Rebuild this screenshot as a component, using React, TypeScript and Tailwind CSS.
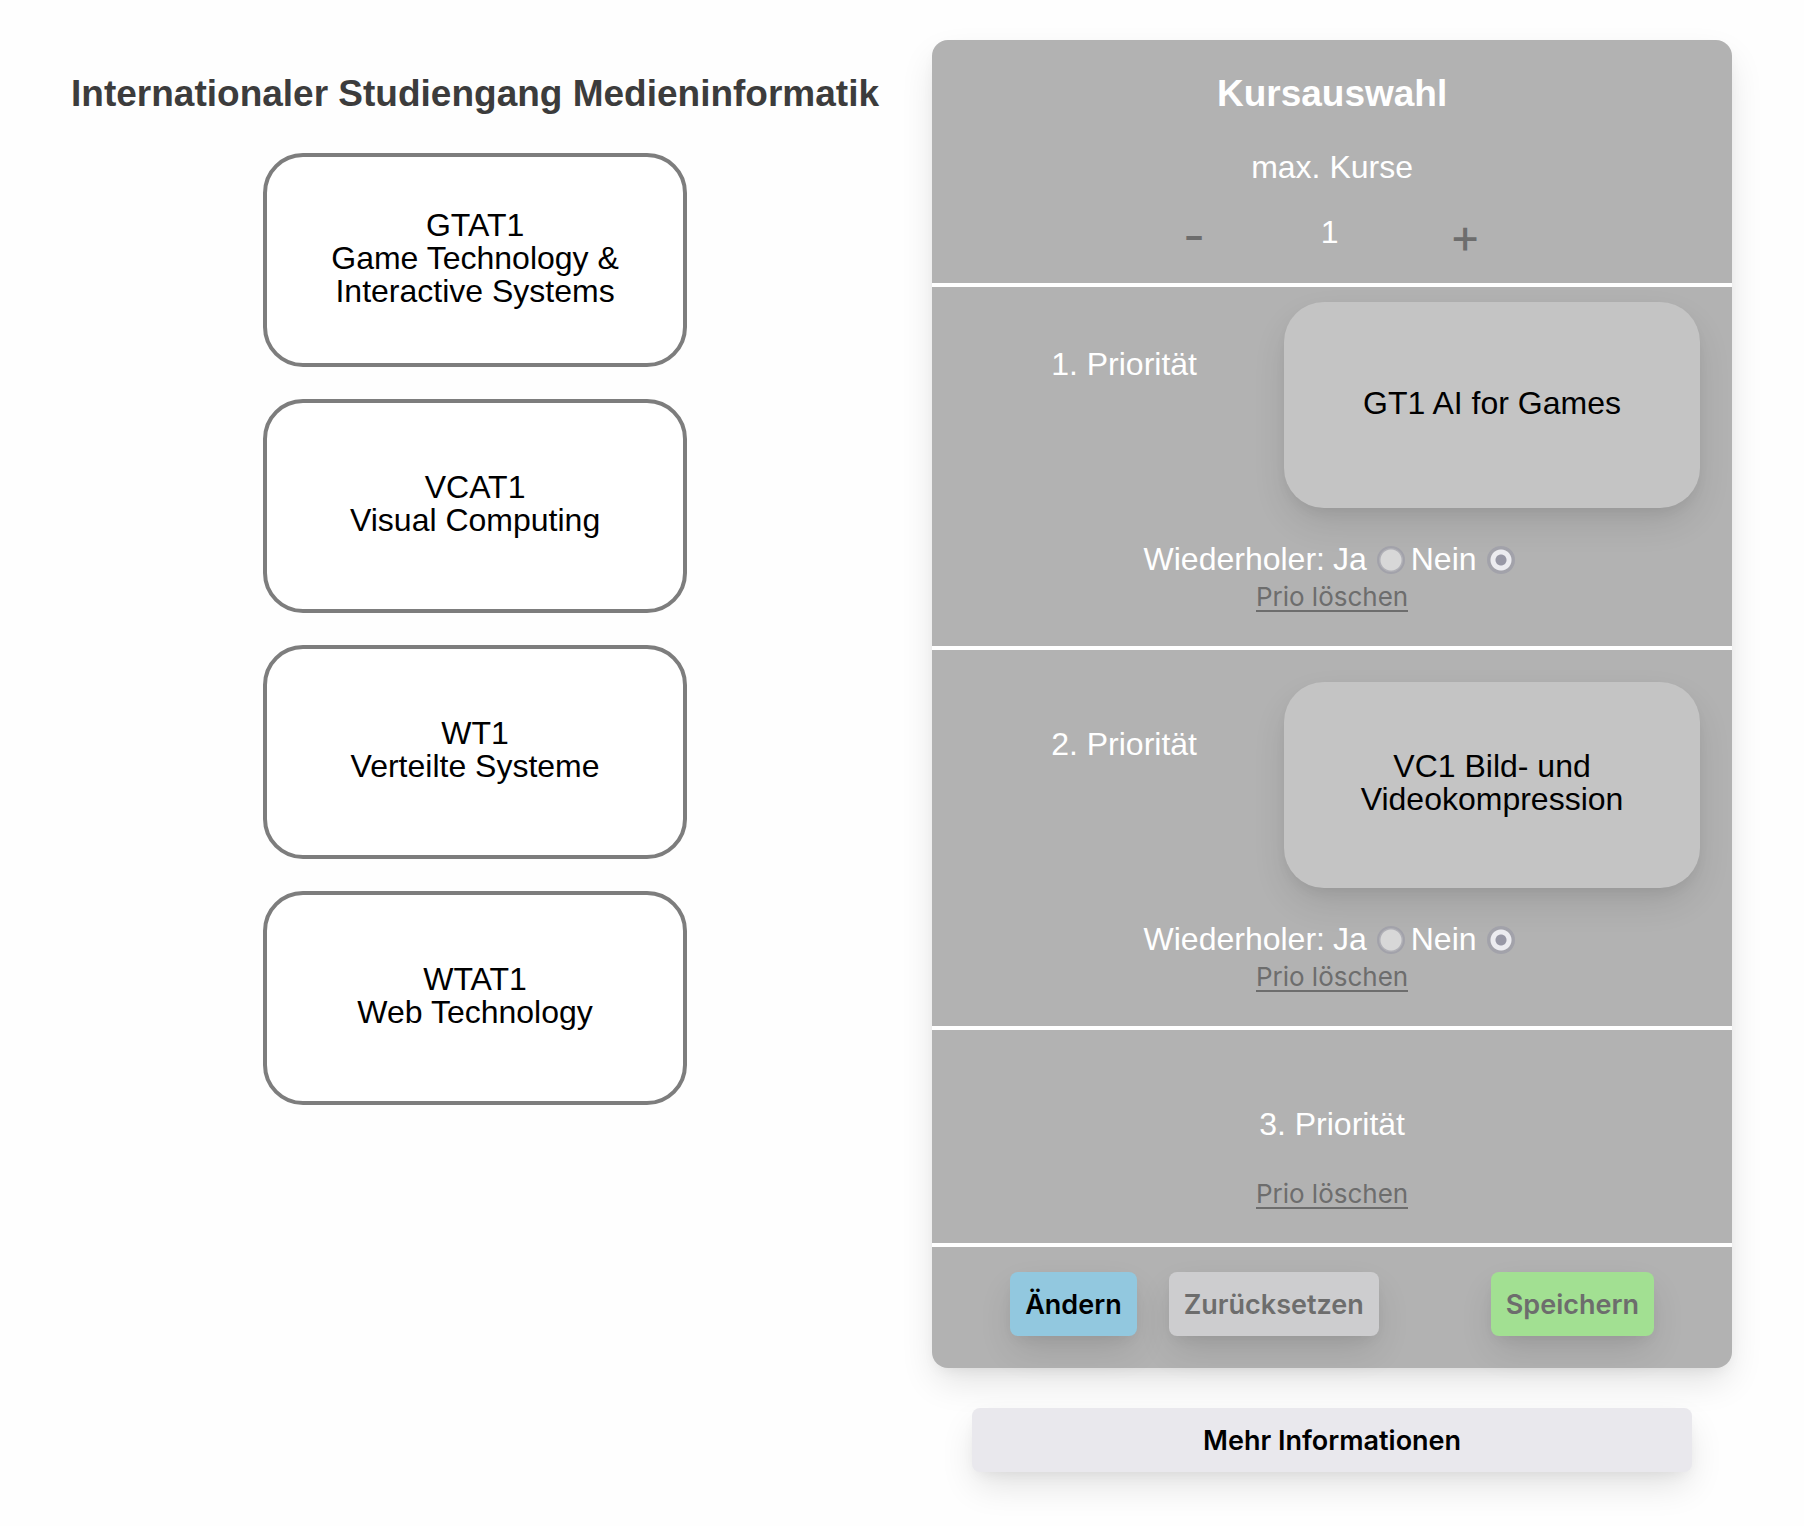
import { useState } from "react";

const courses = [
  { code: "GTAT1", name: "Game Technology & Interactive Systems" },
  { code: "VCAT1", name: "Visual Computing" },
  { code: "WT1", name: "Verteilte Systeme" },
  { code: "WTAT1", name: "Web Technology" },
];

const shadow = "shadow-[0_16px_36px_-4px_rgba(0,0,0,0.12),0_6px_16px_-6px_rgba(0,0,0,0.08)]";

function Radio({ name, label, value, on, set }: { name: string; label: string; value: boolean; on: boolean; set: (v: boolean) => void }) {
  return (
    <label className="flex items-center gap-2">
      {label}
      <input
        type="radio"
        name={name}
        checked={on === value}
        onChange={() => set(value)}
        className="mr-[6px] ml-[2px] size-7 appearance-none rounded-full border-2 border-[#a2a2aa] bg-[radial-gradient(circle,#d8d8d8_10px,#b0b0b6_11px)] checked:bg-[radial-gradient(circle,#9898a6_5px,#ececf0_6px,#ececf0_10px,#a2a2aa_11px)] bg-origin-border"
      />
    </label>
  );
}

function DeletePrio() {
  return (
    <button type="button" className="mx-auto mt-2 block h-7 border-b-2 border-[#6d6d6d] font-[Inter] text-[26px] leading-[26px] text-[#6d6d6d]">
      Prio löschen
    </button>
  );
}

function Priority({ nr, course, first }: { nr: number; course?: string; first?: boolean }) {
  const [repeat, setRepeat] = useState(false);
  return (
    <section className={`border-b-4 border-white px-8 pb-[34px] text-white ${first ? "pt-[15px]" : "pt-8"}`}>
      {course ? (
        <>
          <div className="grid grid-cols-[10fr_13fr]">
            <h2 className="pt-[46px] text-center">{nr}. Priorität</h2>
            <div className={`flex min-h-[206px] items-center justify-center rounded-[40px] bg-[#c4c4c4] px-16 pb-1 text-center text-black ${shadow}`}>
              {course}
            </div>
          </div>
          <div role="radiogroup" aria-label="Wiederholer" className="mt-[35px] flex justify-center">
            <span className="mr-2">Wiederholer:</span>
            <Radio name={`repeat-${nr}`} label="Ja" value={true} on={repeat} set={setRepeat} />
            <Radio name={`repeat-${nr}`} label="Nein" value={false} on={repeat} set={setRepeat} />
          </div>
        </>
      ) : (
        <h2 className="mb-10 pt-[46px] text-center">{nr}. Priorität</h2>
      )}
      <DeletePrio />
    </section>
  );
}

export default function App() {
  const [max, setMax] = useState(1);
  return (
    <main className="grid min-h-screen grid-cols-[8fr_7fr] items-start bg-[#fefefe] pt-10 pr-[72px] pb-10 pl-[18px] font-['Liberation_Sans',Arial,sans-serif] text-[32px] leading-[33px]">
      <div className="flex flex-col items-center gap-8 pt-8">
        <h1 className="mb-[5px] text-[37px] leading-[44px] font-bold whitespace-nowrap text-[#3c3c3c]">Internationaler Studiengang Medieninformatik</h1>
        {courses.map((c) => (
          <article key={c.code} className="flex min-h-[214px] w-[424px] flex-col items-center justify-center rounded-[40px] border-4 border-[#7d7d7d] bg-white px-14 pb-1 text-center text-black">
            <span>{c.code}</span>
            <span>{c.name}</span>
          </article>
        ))}
      </div>

      <div>
        <div className={`rounded-2xl bg-[#b2b2b2] ${shadow}`}>
          <header className="border-b-4 border-white pt-8 pb-[27px] text-center text-white">
            <h1 className="text-[37px] leading-[44px] font-bold">Kursauswahl</h1>
            <p className="mt-[35px]">max. Kurse</p>
            <div className="mt-8 flex justify-center pr-[5px]">
              <button type="button" aria-label="weniger" onClick={() => setMax(Math.max(1, max - 1))} className="w-[137px] font-[Inter] text-[48px] leading-[38px] text-[#6d6d6d]">-</button>
              <output className="h-10 w-[134px]">{max}</output>
              <button type="button" aria-label="mehr" onClick={() => setMax(max + 1)} className="w-[137px] font-[Inter] text-[48px] leading-[38px] text-[#6d6d6d]">+</button>
            </div>
          </header>
          <Priority nr={1} course="GT1 AI for Games" first />
          <Priority nr={2} course="VC1 Bild- und Videokompression" />
          <Priority nr={3} />
          <footer className="flex justify-center pt-[25px] pb-8 font-[Inter] text-[27px] font-semibold">
            <button type="button" className={`h-16 rounded-lg bg-[#92c8df] px-[15px] text-black ${shadow}`}>Ändern</button>
            <button type="button" className={`ml-8 h-16 rounded-lg bg-[#cdcdcf] px-[15px] text-[#6d6d6d] ${shadow}`}>Zurücksetzen</button>
            <button type="button" className={`ml-28 h-16 rounded-lg bg-[#a2e092] px-[15px] text-[#6d6d6d] ${shadow}`}>Speichern</button>
          </footer>
        </div>
        <div className="mt-10 px-10">
          <button type="button" className={`h-16 w-full rounded-lg bg-[#e9e8ed] font-[Inter] text-[27px] font-semibold text-black ${shadow}`}>Mehr Informationen</button>
        </div>
      </div>
    </main>
  );
}
